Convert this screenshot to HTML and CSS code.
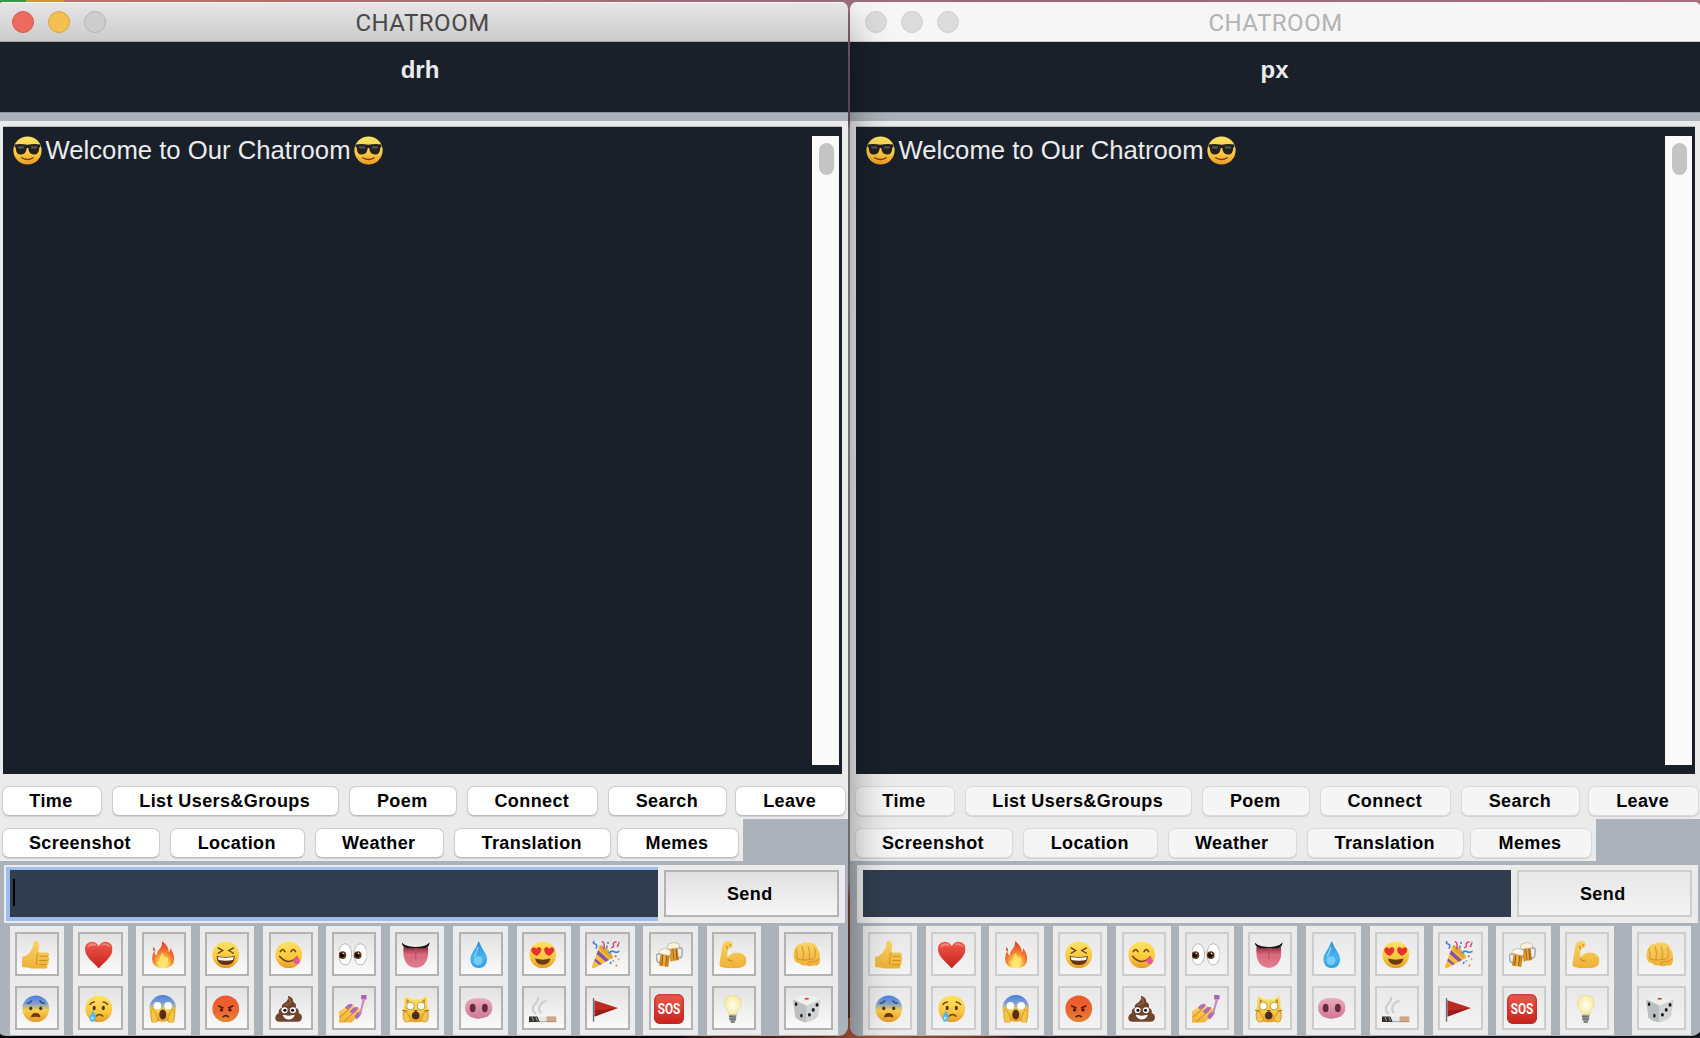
FILE: index.html
```html
<!DOCTYPE html>
<html lang="en">
<head>
<meta charset="utf-8">
<title>CHATROOM</title>
<link rel="stylesheet" href="styles.css">
</head>
<body>
<svg class="sprite" width="0" height="0" aria-hidden="true">
  <defs>
    <linearGradient id="yel" x1="0" y1="0" x2="0" y2="1"><stop offset="0" stop-color="#fde364"/><stop offset=".6" stop-color="#fbc840"/><stop offset="1" stop-color="#e89a28"/></linearGradient>
    <linearGradient id="hand" x1="0" y1="0" x2="0" y2="1"><stop offset="0" stop-color="#fbd465"/><stop offset="1" stop-color="#eeb035"/></linearGradient>
    <linearGradient id="fear" x1="0" y1="0" x2="0" y2="1"><stop offset="0" stop-color="#4a7fe0"/><stop offset=".3" stop-color="#7f9fd0"/><stop offset=".55" stop-color="#f6cf4c"/><stop offset="1" stop-color="#e89a28"/></linearGradient>
    <linearGradient id="rage" x1="0" y1="0" x2="0" y2="1"><stop offset="0" stop-color="#f0562c"/><stop offset=".6" stop-color="#e9682e"/><stop offset="1" stop-color="#e08a38"/></linearGradient>
    <linearGradient id="red" x1="0" y1="0" x2="0" y2="1"><stop offset="0" stop-color="#f0584c"/><stop offset="1" stop-color="#c5231d"/></linearGradient>
    <radialGradient id="flame" cx=".5" cy=".85" r=".75"><stop offset="0" stop-color="#fffbd0"/><stop offset=".3" stop-color="#fcd04b"/><stop offset=".6" stop-color="#f47b30"/><stop offset="1" stop-color="#e4452c"/></radialGradient>
    <linearGradient id="water" x1="0" y1="0" x2="0" y2="1"><stop offset="0" stop-color="#2c8bd8"/><stop offset=".6" stop-color="#48b4f0"/><stop offset="1" stop-color="#2f9be6"/></linearGradient>
    <linearGradient id="tongue" x1="0" y1="0" x2="0" y2="1"><stop offset="0" stop-color="#8c2c3c"/><stop offset=".35" stop-color="#d9697c"/><stop offset="1" stop-color="#e07e92"/></linearGradient>
    <linearGradient id="pink" x1="0" y1="0" x2="0" y2="1"><stop offset="0" stop-color="#eba9bd"/><stop offset="1" stop-color="#cf7795"/></linearGradient>
    <radialGradient id="bulb"><stop offset="0" stop-color="#fffff4"/><stop offset="1" stop-color="#f6e9a0"/></radialGradient>
    <linearGradient id="beer" x1="0" y1="0" x2="1" y2="0"><stop offset="0" stop-color="#c47a1e"/><stop offset=".5" stop-color="#f3b238"/><stop offset="1" stop-color="#b96f1c"/></linearGradient>
  </defs>
  <symbol id="cool" viewBox="0 0 36 36">
    <circle cx="18" cy="18" r="17.5" fill="url(#yel)"/>
    <path d="M2 10.500q8-1.500 16 .5 8-2 16-.5v3l-1.500 1c0 6-2.500 8.500-6.500 8.500-4.500 0-6.500-3-7-8h-2c-.5 5-2.500 8-7 8-4 0-6.500-2.500-6.500-8.500L2 13.500z" fill="#24221f"/>
    <path d="M6 13h8l-1 2.500H7zm16 0h8l-1 2.500h-6z" fill="#5d5a55"/>
    <path d="M11 27q7 4.500 14 0" fill="none" stroke="#704012" stroke-width="1.800" stroke-linecap="round"/>
  </symbol>
  <symbol id="thumb" viewBox="0 0 36 36">
    <path d="M0 21q6-1 9-5 6-6 6-13 0-4 3-3.500 5 1 4.500 9-.5 4-1.500 6.500h11q3.500 0 3.500 2.800 0 2.200-1.500 2.700 2.500 1 2 3.500-.5 2-2 2.500 1.500 1.200 1 3-.5 2-2.500 2.500 1 1 .5 2.500-.5 2.500-4 2.500H16q-4 0-7-2l-9-1z" fill="url(#hand)"/>
    <path d="M23 20h11M22.500 25.500h11M23 31h9M22 15q-3 2-2 5.500-2 2-.5 5.500-1.500 3 1 5.500" fill="none" stroke="#c88a24" stroke-width="1.200"/>
  </symbol>
  <symbol id="heart" viewBox="0 0 36 36">
    <path d="M18 36C13 29 0 22 0 10.500 0 5 4 1 9 1c4 0 7.500 2.500 9 6 1.500-3.500 5-6 9-6 5 0 9 4 9 9.500C36 22 23 29 18 36z" fill="url(#red)"/>
    <path d="M3 9q1-6 7-6 4 0 6 4-7-3-13 2zM21 6q3-4 8-2.500 4 1.500 4.500 5Q28 3.500 21 6z" fill="#f9968b" opacity=".8"/>
  </symbol>
  <symbol id="fire" viewBox="0 0 36 36">
    <path d="M17 0q9 7 9 15 2-2 1.500-6 5 6 5.500 14 0 12-14 13Q4 35 4 23q0-6 3-10 0 4 3 6 0-5 4-9 4-4 3-10z" fill="url(#flame)"/>
    <path d="M18 15q1 5 4 8 1-2 1-4 3 5 2 9-1 6-7 6-8-1-7-8 1 1 3 2-1-7 4-13z" fill="#ffe56a" opacity=".85"/>
    <path d="M6 8q3 3 1 6-3-2-1-6z" fill="#e4502c"/>
  </symbol>
  <symbol id="laugh" viewBox="0 0 36 36">
    <circle cx="18" cy="18" r="17.500" fill="url(#yel)"/>
    <path d="M8 9l6 3.500L8 16M28 9l-6 3.500 6 3.500" fill="none" stroke="#6b4210" stroke-width="1.800" stroke-linecap="round"/>
    <path d="M6 19.500q12 3 24 0-.5 12-12 12T6 19.500z" fill="#633410"/><path d="M7.500 21q10.500 2 21 0l-1 4q-9.500 1.500-19 0z" fill="#fff"/>
  </symbol>
  <symbol id="yum" viewBox="0 0 36 36">
    <circle cx="18" cy="18" r="17.500" fill="url(#yel)"/>
    <path d="M7 14q3-6 6 0M21 14q3-6 6 0M6 20q11 13 23 1" fill="none" stroke="#70420f" stroke-width="2" stroke-linecap="round"/>
    <path d="M23 25l5-4q4 1 4.500 5 0 4-4 4.500-3 0-5.500-5.500z" fill="#e9579a"/>
  </symbol>
  <symbol id="eyes" viewBox="0 0 36 36">
    <ellipse cx="8" cy="17.500" rx="8.500" ry="14" fill="#fff" stroke="#a5a5a5"/><ellipse cx="28" cy="17.500" rx="8.500" ry="14" fill="#fff" stroke="#a5a5a5"/>
    <circle cx="4.500" cy="18.500" r="5" fill="#623a18"/><circle cx="24.500" cy="18.500" r="5" fill="#623a18"/>
    <circle cx="4" cy="18.500" r="3" fill="#110b08"/><circle cx="24" cy="18.500" r="3" fill="#110b08"/><circle cx="5.500" cy="16.500" r="1" fill="#fff"/><circle cx="25.500" cy="16.500" r="1" fill="#fff"/>
  </symbol>
  <symbol id="mouth" viewBox="0 0 36 36">
    <path d="M2 8q16 3 32 0 1 13-2 18-4 9-14 9T4 26Q1 20 2 8z" fill="url(#tongue)"/>
    <path d="M-1 1q4 5 10 6 9 2 18 0 6-1 10-6-2 8-7 8-12 1-24 0Q1 9-1 1z" fill="#191214"/>
    <path d="M18 11v13" stroke="#b54c62" stroke-width="1.200"/>
  </symbol>
  <symbol id="drop" viewBox="0 0 36 36">
    <path d="M18 0q3 8 8 15 3 4.500 3 9.500Q28 35 18 35.500 8 35 7 24.500 7 19 10 15q5-7 8-15z" fill="url(#water)"/>
    <ellipse cx="17" cy="26" rx="6" ry="6" fill="#8bdcfb" opacity=".7"/><path d="M17 8q-2 8-5 12" stroke="#8ad2f8" stroke-width="2" fill="none"/>
  </symbol>
  <symbol id="love" viewBox="0 0 36 36">
    <circle cx="18" cy="18" r="17.500" fill="url(#yel)"/>
    <path d="M10 19.500q-8-4-7-8.500Q5 6 9.500 10q4-4 6.500 0 1 5-6 9.500z" fill="#e6322c"/><path d="M26 19.500q-7-4-6-9.500 2.500-4 6.500 0 4.500-4 6.500.500 1 4.500-7 9z" fill="#e6322c"/>
    <path d="M8 23q10 3 20 0-1 8-10 8T8 23z" fill="#6b3a10"/>
  </symbol>
  <symbol id="party" viewBox="0 0 36 36">
    <path d="M10 6l18 16L2 36q-3 0-2-3z" fill="#f0bf3e"/>
    <path d="M8 12l14 13-4 2L6 17zM4 23l9 7-3 1.500-7-5.500z" fill="#8b51a8"/>
    <ellipse cx="18.500" cy="14" rx="3.500" ry="11.500" transform="rotate(-45 18.500 14)" fill="#dca932"/>
    <path d="M22 16q4-4 7-2t8-1" fill="none" stroke="#3f86dc" stroke-width="2.200"/><path d="M13 0q5 4 2 11M25 9q4-1 3-4t4-4M36 1l-3 7" fill="none" stroke="#dc4a78" stroke-width="2"/>
    <path d="M3 0q-3 3 1 4t1 6M21 1v3M20 6l-1 4M24 30l1-3" fill="none" stroke="#477bdc" stroke-width="2"/>
    <circle cx="31" cy="20" r="1.300" fill="#dc4a78"/><circle cx="35" cy="24" r="1.300" fill="#f19b3a"/><circle cx="32" cy="32" r="1.400" fill="#f08040"/><circle cx="28" cy="26" r="1.200" fill="#5aa5df"/>
  </symbol>
  <symbol id="beers" viewBox="0 0 36 36">
    <path d="M27 9h4q4 0 3.500 4l-1 7q-1 3-4 2" fill="none" stroke="#a3adb2" stroke-width="2"/>
    <path d="M17 7l11 0 2 18-11 2z" fill="url(#beer)"/><path d="M15 7q0-4 5-4 4-2 8 0 4 1 2 6l-14 2z" fill="#f8f1df" stroke="#b7a886" stroke-width=".8"/>
    <path d="M6 17H3q-3 0-2.500 4l1 5q1 3 4 2" fill="none" stroke="#a3adb2" stroke-width="2"/>
    <path d="M6 16l12 2-2 16-12-2z" fill="url(#beer)"/><path d="M9 18L7.500 32M14 19l-1.500 14M22 10l1.500 15M26 10l1.500 14" stroke="#8c5217" stroke-width="1.200"/>
    <path d="M4 16q-1-5 4-5 3-3 7 0 5 0 4 4 0 5-3 4-6-1-12-3z" fill="#fbf6e8" stroke="#b7a886" stroke-width=".8"/>
  </symbol>
  <symbol id="muscle" viewBox="0 0 36 36">
    <path d="M5 4Q7 0 12 0q6 0 6 5 0 3-3 4l-3 1q-2 6-1 12 5-7 13-7 12 1 12 11 0 9-12 9.500Q10 36 3 34q-3-1-2-7Q3 14 5 4z" fill="url(#hand)"/>
    <path d="M11 23q2 4 7 3M12 10q-3-1-2-4M13 5l3 1" fill="none" stroke="#c88a24" stroke-width="1.500"/>
  </symbol>
  <symbol id="fist" viewBox="0 0 36 36">
    <path d="M3 9q3-6 8-5 3-3 8-2 3-1 6 1 6 1 7 7 4 5 3 12 1 3 0 6-2 5-8 4-5 2-8 0-8 1-11-3-7-1-7-8-1-7 2-12z" fill="url(#hand)"/>
    <path d="M4 10q2 7 1 14M12 7q3 8 1 18M20 7q3 8 1 17M28 9q3 7 0 14M5 23q8 4 22 0M20 32q-2-5 4-5 6 1 11-4" fill="none" stroke="#d0902a" stroke-width="1.200"/>
  </symbol>
  <symbol id="worry" viewBox="0 0 36 36">
    <circle cx="18" cy="18" r="17.500" fill="url(#fear)"/>
    <path d="M6 11q5 0 7-4M30 11q-5 0-7-4" fill="none" stroke="#2d5288" stroke-width="1.800"/>
    <ellipse cx="11.500" cy="17.500" rx="2" ry="2.600" fill="#503416"/><ellipse cx="24.500" cy="17.500" rx="2" ry="2.600" fill="#503416"/><path d="M12 29.500q0-6 6-6t6 6q-6-2-12 0z" fill="#70360f"/>
  </symbol>
  <symbol id="cry" viewBox="0 0 36 36">
    <circle cx="18" cy="18" r="17.500" fill="url(#yel)"/>
    <path d="M6 13q3-4 7-4M30 13q-3-4-7-4M14 28q5-5 10 0" fill="none" stroke="#70420f" stroke-width="1.800"/>
    <ellipse cx="12" cy="17" rx="2" ry="3" fill="#503416"/><ellipse cx="24" cy="17" rx="2" ry="3" fill="#503416"/><path d="M10 20q5 7 4 11-1 4-5 4-4-1-3-6 2-4 4-9z" fill="#55b6ee"/><circle cx="9.500" cy="30" r="2" fill="#aee4fb"/>
  </symbol>
  <symbol id="scream" viewBox="0 0 36 36">
    <circle cx="18" cy="17.500" r="17.500" fill="url(#fear)"/>
    <circle cx="11" cy="14" r="5" fill="#fff"/><circle cx="25" cy="14" r="5" fill="#fff"/>
    <ellipse cx="18" cy="25.500" rx="4.500" ry="6.500" fill="#5b2d12"/>
    <path d="M3 19q3-2 4 2l4 9q1 4-1 6H4q-3-9-1-17zM33 19q-3-2-4 2l-4 9q-1 4 1 6h6q3-9 1-17z" fill="#f6c443" stroke="#cf8d22" stroke-width=".9"/>
  </symbol>
  <symbol id="angry" viewBox="0 0 36 36">
    <circle cx="18" cy="18" r="17.500" fill="url(#rage)"/>
    <path d="M8 14l7 3M28 14l-7 3" stroke="#5b180c" stroke-width="2"/><circle cx="12.500" cy="19.500" r="2.100" fill="#4a140c"/><circle cx="23.500" cy="19.500" r="2.100" fill="#4a140c"/><path d="M14 29q4-4 8 0" fill="none" stroke="#5b180c" stroke-width="2"/>
  </symbol>
  <symbol id="poop" viewBox="0 0 36 36">
    <path d="M17 1q7 2 7 8 5 2 3 8 5 1 4 7 5 1 4 7-1 4-6 4H6q-5 0-5.500-4Q0 26 5 24q-1-6 4-7-1-5 4-7 5-3 4-9z" fill="#6f432c"/>
    <path d="M17 4q4 3 3 6-3 3-7 3M11 18q8 1 13-1" fill="none" stroke="#9b6a4c" stroke-width="1.500"/>
    <circle cx="12.500" cy="20" r="4" fill="#fff"/><circle cx="23.500" cy="20" r="4" fill="#fff"/><circle cx="13" cy="20" r="2" fill="#111"/><circle cx="23" cy="20" r="2" fill="#111"/><path d="M10 26q8 2 16 0-2 6-8 6t-8-6z" fill="#fff"/>
  </symbol>
  <symbol id="nails" viewBox="0 0 36 36">
    <path d="M-2 23l11-8 9-2 4 3 6 2q1 4-2 8L15 38H-2z" fill="url(#hand)"/>
    <path d="M1 29l13-11M6 35l14-13" stroke="#c5831d" stroke-width="1.300"/>
    <path d="M8 16q5-6 10-4-1 5-8 7zM14 22q5-8 11-6 0 4-7 9zM20 28q5-8 10-6 0 4-7 10z" fill="#b06cb8"/>
    <path d="M31 6l3 .5-5 17-3 3z" fill="#c48ac8"/><rect x="29" y="-1" width="8" height="7" rx="1" fill="#b060b4"/>
  </symbol>
  <symbol id="cat" viewBox="0 0 36 36">
    <path d="M4 1l8 5h12l8-5q2 6 1 13 3 8 0 15-5 7-15 7T3 29Q0 22 3 14 2 7 4 1z" fill="url(#yel)"/>
    <path d="M6 5l4 3-4 3zM30 5l-4 3 4 3z" fill="#c98548"/><circle cx="11" cy="14.500" r="5" fill="#fff" stroke="#a68635"/><circle cx="25" cy="14.500" r="5" fill="#fff" stroke="#a68635"/>
    <ellipse cx="18" cy="27" rx="5" ry="5" fill="#47301c"/><path d="M15 20h6l-3 3z" fill="#59391b"/><path d="M2 22q4-1 5 2l4 7q0 5-5 5Q0 34 2 22zM34 22q-4-1-5 2l-4 7q0 5 5 5 6-2 4-14z" fill="#f4c64f" stroke="#bd8426" stroke-width=".9"/>
    <path d="M0 20l7 1M36 20l-7 1" stroke="#705528"/>
  </symbol>
  <symbol id="pig" viewBox="0 0 36 36">
    <path d="M18 4q17 0 18 12 0 14-18 15Q0 30 0 16 1 4 18 4z" fill="url(#pink)"/><ellipse cx="10" cy="17" rx="3.800" ry="5.500" fill="#662a3d"/><ellipse cx="26" cy="17" rx="3.800" ry="5.500" fill="#662a3d"/>
  </symbol>
  <symbol id="smoke" viewBox="0 0 36 36">
    <path d="M9 25q-7-6-2-12 5-4 5-10M16 24q-5-5-1-11 3-5 8-5" fill="none" stroke="#cecece" stroke-width="2.800"/>
    <rect x="0" y="28" width="36" height="7.500" rx="1" fill="#e8e8e8"/><path d="M0 28h11l3 7.500H0z" fill="#33302e"/><path d="M4 29l2 5M9 29l2 5" stroke="#989490" stroke-width="1.500"/><rect x="23" y="28" width="13" height="7.500" fill="#d3a67f"/><path d="M12 35h24" stroke="#888"/>
  </symbol>
  <symbol id="flag" viewBox="0 0 36 36"><path d="M3 7l31 10L3 28z" fill="#bd2a24"/><path d="M4 20q14 0 29-3L4 28z" fill="#981d1b"/><path d="M2 4v31" stroke="#68727a" stroke-width="1.800"/></symbol>
  <symbol id="sos" viewBox="0 0 36 36">
    <rect x="0" y="0" width="36" height="36" rx="7" fill="url(#red)"/><rect x="1" y="1" width="34" height="34" rx="6" fill="none" stroke="#bb2c22"/>
  </symbol>
  <symbol id="lamp" viewBox="0 0 36 36">
    <path d="M18 0q11 1 11 11 0 5-4 9-2 3-2 6H13q0-3-2-6-4-4-4-9Q7 1 18 0z" fill="url(#bulb)" stroke="#e0cf86" stroke-width=".6"/><path d="M13 26h10l-1 7-2 3h-4l-2-3z" fill="#969a9c"/><path d="M13 28l9 1M13 31l9 1" stroke="#5c6062" stroke-width="1.200"/><path d="M15 35h6l-1 2h-4z" fill="#333"/>
  </symbol>
  <symbol id="die" viewBox="0 0 36 36">
    <path d="M19 0q9 1 16 5.500L18 14 0 5.500Q9 1 19 0z" fill="#eeefef"/><path d="M0 5.500L18 14v22Q7 34 3 29z" fill="#bcbec0"/><path d="M36 6L17.500 14v22q12-3 15.500-9z" fill="#d2d3d5"/>
    <ellipse cx="18" cy="5" rx="3" ry="1.300" fill="#e2403a"/><g fill="#1c1c1c"><ellipse cx="4" cy="12" rx="1.600" ry="2.400"/><ellipse cx="11" cy="27" rx="1.600" ry="2.600"/><ellipse cx="31.500" cy="13" rx="2" ry="2.400"/><ellipse cx="26.500" cy="19.500" rx="2" ry="2.400"/><ellipse cx="21.500" cy="26" rx="2" ry="2.400"/></g>
  </symbol>
</svg>

<main class="desktop">
  <section class="window active">
    <header class="titlebar">
      <div class="lights"><i class="light close"></i><i class="light minimise"></i><i class="light expand"></i></div>
      <h1 class="title">CHATROOM</h1>
    </header>
    <div class="user">drh</div>
    <div class="divider"></div>
    <div class="chat-panel">
      <div class="chat">
        <p class="message"><svg><use href="#cool"/></svg><span>Welcome to Our Chatroom</span><svg><use href="#cool"/></svg></p>
        <div class="scrollbar"><div class="scroll-thumb"></div></div>
      </div>
    </div>
    <nav class="tools tools-top"><button>Time</button><button>List Users&amp;Groups</button><button>Poem</button><button>Connect</button><button class="tight">Search</button><button class="last">Leave</button></nav>
    <nav class="tools tools-bottom"><button>Screenshot</button><button>Location</button><button>Weather</button><button class="close-set">Translation</button><button class="last">Memes</button></nav>
    <div class="composer"><div class="field"><span class="caret"></span></div><button class="send">Send</button></div>
    <div class="emojis">
      <div class="pair"><button><svg><use href="#thumb"/></svg></button><button><svg><use href="#worry"/></svg></button></div>
      <div class="pair"><button><svg><use href="#heart"/></svg></button><button><svg><use href="#cry"/></svg></button></div>
      <div class="pair"><button><svg><use href="#fire"/></svg></button><button><svg><use href="#scream"/></svg></button></div>
      <div class="pair"><button><svg><use href="#laugh"/></svg></button><button><svg><use href="#angry"/></svg></button></div>
      <div class="pair"><button><svg><use href="#yum"/></svg></button><button><svg><use href="#poop"/></svg></button></div>
      <div class="pair"><button><svg><use href="#eyes"/></svg></button><button><svg><use href="#nails"/></svg></button></div>
      <div class="pair"><button><svg><use href="#mouth"/></svg></button><button><svg><use href="#cat"/></svg></button></div>
      <div class="pair"><button><svg><use href="#drop"/></svg></button><button><svg><use href="#pig"/></svg></button></div>
      <div class="pair"><button><svg><use href="#love"/></svg></button><button><svg><use href="#smoke"/></svg></button></div>
      <div class="pair"><button><svg><use href="#party"/></svg></button><button><svg><use href="#flag"/></svg></button></div>
      <div class="pair"><button><svg><use href="#beers"/></svg></button><button><svg class="big" viewBox="0 0 36 36"><use href="#sos" width="36" height="36"/><text class="sos-text" x="18" y="24" text-anchor="middle" textLength="27" lengthAdjust="spacingAndGlyphs">SOS</text></svg></button></div>
      <div class="pair"><button><svg><use href="#muscle"/></svg></button><button><svg><use href="#lamp"/></svg></button></div>
      <div class="pair wide"><button><svg><use href="#fist"/></svg></button><button><svg><use href="#die"/></svg></button></div>
    </div>
  </section>

  <section class="window inactive">
    <header class="titlebar">
      <div class="lights"><i class="light"></i><i class="light"></i><i class="light"></i></div>
      <h1 class="title">CHATROOM</h1>
    </header>
    <div class="user">px</div>
    <div class="divider"></div>
    <div class="chat-panel">
      <div class="chat">
        <p class="message"><svg><use href="#cool"/></svg><span>Welcome to Our Chatroom</span><svg><use href="#cool"/></svg></p>
        <div class="scrollbar"><div class="scroll-thumb"></div></div>
      </div>
    </div>
    <nav class="tools tools-top"><button>Time</button><button>List Users&amp;Groups</button><button>Poem</button><button>Connect</button><button class="tight">Search</button><button class="last">Leave</button></nav>
    <nav class="tools tools-bottom"><button>Screenshot</button><button>Location</button><button>Weather</button><button class="close-set">Translation</button><button class="last">Memes</button></nav>
    <div class="composer"><div class="field"></div><button class="send">Send</button></div>
    <div class="emojis">
      <div class="pair"><button><svg><use href="#thumb"/></svg></button><button><svg><use href="#worry"/></svg></button></div>
      <div class="pair"><button><svg><use href="#heart"/></svg></button><button><svg><use href="#cry"/></svg></button></div>
      <div class="pair"><button><svg><use href="#fire"/></svg></button><button><svg><use href="#scream"/></svg></button></div>
      <div class="pair"><button><svg><use href="#laugh"/></svg></button><button><svg><use href="#angry"/></svg></button></div>
      <div class="pair"><button><svg><use href="#yum"/></svg></button><button><svg><use href="#poop"/></svg></button></div>
      <div class="pair"><button><svg><use href="#eyes"/></svg></button><button><svg><use href="#nails"/></svg></button></div>
      <div class="pair"><button><svg><use href="#mouth"/></svg></button><button><svg><use href="#cat"/></svg></button></div>
      <div class="pair"><button><svg><use href="#drop"/></svg></button><button><svg><use href="#pig"/></svg></button></div>
      <div class="pair"><button><svg><use href="#love"/></svg></button><button><svg><use href="#smoke"/></svg></button></div>
      <div class="pair"><button><svg><use href="#party"/></svg></button><button><svg><use href="#flag"/></svg></button></div>
      <div class="pair"><button><svg><use href="#beers"/></svg></button><button><svg class="big" viewBox="0 0 36 36"><use href="#sos" width="36" height="36"/><text class="sos-text" x="18" y="24" text-anchor="middle" textLength="27" lengthAdjust="spacingAndGlyphs">SOS</text></svg></button></div>
      <div class="pair"><button><svg><use href="#muscle"/></svg></button><button><svg><use href="#lamp"/></svg></button></div>
      <div class="pair wide"><button><svg><use href="#fist"/></svg></button><button><svg><use href="#die"/></svg></button></div>
    </div>
  </section>
</main>
</body>
</html>
```
FILE: styles.css
```css
* { box-sizing: border-box; }
body { margin: 0; overflow: hidden; font-family: "Liberation Sans", Arial, sans-serif; }
button { font: inherit; color: #000; padding: 0; margin: 0; }
.sprite { position: absolute; }

.desktop {
  position: relative;
  width: 1700px;
  height: 1038px;
  overflow: hidden;
  background:
    linear-gradient(90deg, #3f9c4b 0 26px, #d9a23e 26px 64px, transparent 64px) top / 100% 3px no-repeat,
    linear-gradient(90deg, #c47a6c, #a37482 45%, #94697c 60%, #a8707c) top / 100% 12px no-repeat,
    linear-gradient(90deg, #100c10 0 40%, #5a2c20 41%, #a8553a 50%, #7c3f2a 57%, #241a1c 60%, #14161c) bottom / 100% 20px no-repeat,
    linear-gradient(#94697c, #6d5560 120px, #999 130px, #888 880px, #7d4636 900px, #50281e);
}

.window {
  position: absolute;
  top: 2px;
  width: 851px;
  height: 1034px;
  display: flex;
  flex-direction: column;
  overflow: hidden;
  border-radius: 7px 7px 9px 9px;
  background: #abb2b9;
}
.active { left: -3px; z-index: 2; box-shadow: 0 24px 44px rgba(0, 0, 0, .45); }
.inactive { left: 850px; z-index: 1; }

.titlebar {
  height: 40px;
  flex: none;
  display: grid;
  grid-template-columns: 120px 1fr 120px;
  align-items: center;
  background: linear-gradient(#e7e7e7, #cbcbcb);
  border-bottom: 1px solid #a5a5a5;
  box-shadow: inset 0 1px #f3f3f3;
}
.lights { display: flex; gap: 14.3px; padding: 1px 0 0 14.500px; }
.light { width: 22px; height: 22px; border-radius: 50%; background: #cdcdcd; border: 1px solid #b5b5b5; flex: none; }
.close { background: #ed6a5f; border-color: #d95a50; }
.minimise { background: #f5bf4f; border-color: #dca73d; }
.title { margin: 0; padding-top: 2px; text-align: center; font: 400 24px/36px Roboto, sans-serif; letter-spacing: .5px; color: #484848; }
.inactive .titlebar { background: #f6f6f6; border-color: #cfcfcf; }
.inactive .title { color: #b3b3b3; }
.inactive .light { background: #dcdcdc; border-color: #cecece; }

.user { height: 70px; flex: none; background: #19202a; color: #eaecee; text-align: center; font-size: 24px; font-weight: 700; line-height: 56px; padding-right: 5px; }
.inactive .user { padding-right: 2px; }
.divider { height: 9px; flex: none; border-top: 1px solid #8f959c; }

.chat-panel { background: #ebebeb; padding: 6px 6px 0 5.500px; }
.chat { height: 647px; display: flex; justify-content: space-between; background: #19202a; padding: 9px 3.500px 9px 10.500px; box-shadow: 0 -1px #b4bcbc, 0 1px #c4c8c8; }
.message { margin: 0; display: flex; align-items: center; height: 29px; gap: 3.500px; color: #eaecee; font-size: 25.700px; line-height: 29px; white-space: nowrap; }
.message svg { width: 29px; height: 29px; flex: none; }
.scrollbar { width: 27px; background: #fafafa; padding: 7px 5px 0 7px; }
.scroll-thumb { height: 32px; border-radius: 8px; background: #c4c4c4; }

.tools { display: grid; background: #ebebeb; padding-left: 4.500px; flex: none; }
.tools-top { height: 45px; padding-top: 12px; grid-template-columns: 110.500px 237px 118px 141.200px 127px 110.500px; }
.tools-bottom { height: 42px; width: 746px; padding-top: 9px; grid-template-columns: 168.500px 145px 139px 163px 121.500px; }
.tools button {
  height: 30px;
  margin-right: 10px;
  border: 1px solid #cdcdcd;
  border-bottom-color: #b9b9b9;
  border-radius: 7px;
  background: #fff;
  box-shadow: 0 1px 1px #d0d0d0;
  font-size: 18px;
  font-weight: 700;
  letter-spacing: .4px;
  line-height: 27px;
  padding-right: 1.500px;
}
.tools-bottom button { line-height: 26px; }
.tools .tight { margin-right: 8px; }
.tools .close-set { margin-right: 6px; }
.tools .last { margin-right: 0; }
.inactive .tools button { background: #f5f5f5; border-color: #dadada; }

.composer { height: 58px; flex: none; margin: 4px 3px 0 7px; padding: 5px 6px 6px 5.500px; display: flex; gap: 5.500px; background: #ebebeb; }
.field { width: 648.500px; height: 47px; background: #313d4e; padding: 9px 0 0 3px; }
.active .field { box-shadow: -4px 0 #9dbdec, 0 -3px #9dbdec, 0 4px #9dbdec, -4px -3px #9dbdec, -4px 4px #9dbdec; }
.caret { display: block; width: 2px; height: 27px; background: #000; }
.send { width: 175.500px; height: 47px; border: 2px solid #b3b3b3; border-radius: 0; background: linear-gradient(#e0e0e0, #f7f7f7); font-size: 18px; font-weight: 700; letter-spacing: .4px; line-height: 45px; padding-right: 3px; }
.inactive .send { border-color: #cecece; background: linear-gradient(#e8e8e8, #f2f2f2); }

.emojis { display: flex; gap: 8.700px; padding: 3px 0 0 12.500px; }
.pair { width: 54.700px; height: 109px; flex: none; background: #ebebeb; padding: 6px 5px 0 5.500px; display: flex; flex-direction: column; gap: 10px; }
.pair button { height: 44px; border: 2px solid #b3b3b3; background: linear-gradient(#e2e2e2, #fafafa); display: flex; align-items: center; justify-content: center; padding: 2px 3px 0 0; }
.pair svg { width: 27.500px; height: 27.500px; flex: none; overflow: visible; }
.pair .big { width: 30px; height: 30px; }
.wide { width: 59px; margin-left: 8.700px; }
.inactive .pair button { border-color: #cdcdcd; background: linear-gradient(#e8e8e8, #f3f3f3); }
.sos-text { font: 700 17px Roboto, sans-serif; fill: #fff; }
```
